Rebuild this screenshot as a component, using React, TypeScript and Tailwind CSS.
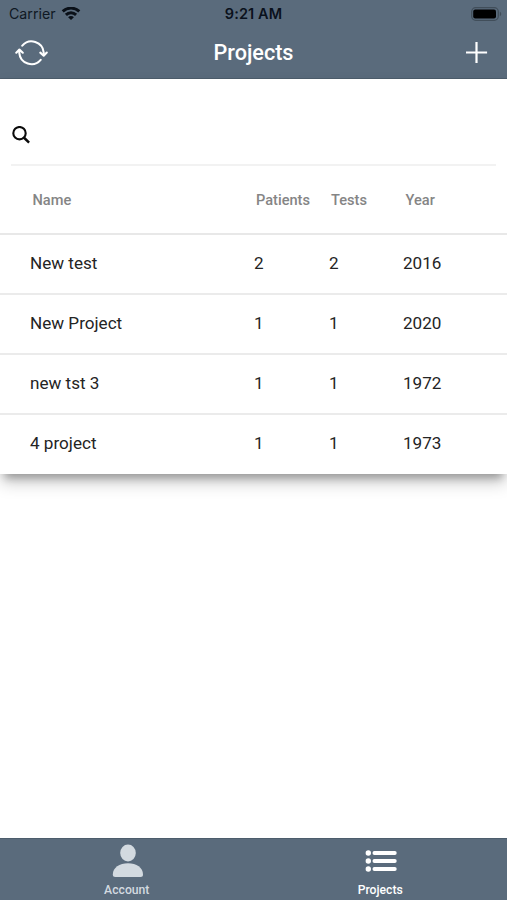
const rows = [
  { name: 'New test', patients: 2, tests: 2, year: 2016 },
  { name: 'New Project', patients: 1, tests: 1, year: 2020 },
  { name: 'new tst 3', patients: 1, tests: 1, year: 1972 },
  { name: '4 project', patients: 1, tests: 1, year: 1973 },
];

function Wifi() {
  return (
    <svg width="20" height="14" viewBox="0 0 20 14" fill="none" stroke="#0a1018" strokeWidth="2.9">
      <path d="M1.7 4.4C6.4 0 13.6 0 18.3 4.4" />
      <path d="M4.9 7.9C7.8 5 12.2 5 15.1 7.9" />
      <path d="M10 13.1L7.1 10.2C8.7 8.7 11.3 8.7 12.9 10.2Z" fill="#0a1018" stroke="none" />
    </svg>
  );
}

function Battery() {
  return (
    <svg width="31" height="14" viewBox="0 0 31 14">
      <rect x="0.7" y="0.7" width="26.6" height="12.6" rx="4" fill="none" stroke="#414e5a" strokeWidth="1.3" />
      <rect x="2.2" y="2.4" width="22.8" height="9.2" rx="2" fill="#000" />
      <path d="M28.8 4.8C30.7 5.5 30.7 8.5 28.8 9.2Z" fill="#414e5a" />
    </svg>
  );
}

function Refresh() {
  return (
    <svg width="34" height="28" viewBox="0 0 34 28" fill="none" stroke="#fff" strokeWidth="2.1" strokeLinecap="round" strokeLinejoin="round">
      <path d="M7.3 6.6A12.2 12.2 0 0 1 28.7 13.5V16" />
      <path d="M25.7 20.9A12.2 12.2 0 0 1 4.3 14V11.5" />
      <path d="M25.3 13.6L28.7 16.7L31.8 13.6" />
      <path d="M1.3 13.7L4.4 10.6L7.8 13.7" />
    </svg>
  );
}

export default function App() {
  return (
    <div className="flex h-[900px] w-[507px] flex-col overflow-hidden bg-white font-[Roboto,sans-serif]">
      <header className="h-[79px] shrink-0 border-b border-[#4d5d6c] bg-[#5a6b7c]">
        <div className="grid h-7 grid-cols-[1fr_120px_1fr] items-center pr-[7px] pl-[9px] font-[Inter,sans-serif]">
          <div className="flex items-center gap-[4px] text-[#0f1823]">
            <span className="w-[48px] text-[14.2px] leading-5 whitespace-nowrap">Carrier</span>
            <Wifi />
          </div>
          <div className="-ml-[2px] text-center text-[14.5px] leading-5 font-semibold tracking-[0.1px] whitespace-nowrap text-[#0a111c]">9:21 AM</div>
          <div className="-mr-[1.5px] -mt-px flex justify-end"><Battery /></div>
        </div>
        <div className="grid h-[49px] grid-cols-[1fr_120px_1fr] items-center pr-[15px] pl-[15px]">
          <Refresh />
          <h1 className="text-center text-[21.6px] leading-6 font-medium text-white">Projects</h1>
          <svg className="mr-[4px] justify-self-end" width="22" height="22" viewBox="0 0 22 22" stroke="#fff" strokeWidth="2.2" strokeLinecap="square">
            <path d="M10.5 1V20M1 10.5H20" />
          </svg>
        </div>
      </header>

      <main className="flex-1">
        <section className="h-[395px] bg-white shadow-[0_9px_8px_-5px_rgba(0,0,0,0.26),0_9px_16px_-1px_rgba(0,0,0,0.22)]">
          <div className="mx-[11px] flex h-[87px] items-end border-b-2 border-[#f2f2f2] pb-[19px]">
            <svg width="19" height="19" viewBox="0 0 19 19" fill="none" stroke="#0b0b0b" strokeWidth="2.1">
              <circle cx="8.5" cy="7.2" r="6.2" />
              <path d="M12.8 11.5L18.1 16.6" strokeWidth="2.5" />
            </svg>
          </div>
          <div className="grid h-[69px] grid-cols-[223.5px_75px_74.5px_1fr] items-center border-b-2 border-[#e8e8e8] pt-[2px] pl-[32.5px] text-[14.6px] font-medium text-[#858585]">
            <span>Name</span>
            <span>Patients</span>
            <span>Tests</span>
            <span>Year</span>
          </div>
          {rows.map((row) => (
            <div key={row.name} className="grid h-[60px] grid-cols-[224px_75px_74px_1fr] items-center border-b-2 border-[#ebebeb] pl-[30px] text-[17.1px] text-[#242424] last:h-[59px] last:border-white">
              <span>{row.name}</span>
              <span>{row.patients}</span>
              <span>{row.tests}</span>
              <span>{row.year}</span>
            </div>
          ))}
        </section>
      </main>

      <nav className="grid h-[62px] shrink-0 grid-cols-2 border-t border-[#4d5d6c] bg-[#5a6b7c] text-[12.2px] leading-[14px] font-medium">
        <div className="flex flex-col items-center pt-[5px] text-[#d3dae0]">
          <svg width="32" height="34" viewBox="0 0 32 34" fill="currentColor">
            <ellipse cx="17" cy="9" rx="7.8" ry="8.5" />
            <path d="M1.8 30.5C1.8 23.5 8.5 19.2 17 19.2S32 23.5 32 30.5Q32 33 29.5 33H4.3Q1.8 33 1.8 30.5Z" />
          </svg>
          <span className="mt-[5px]">Account</span>
        </div>
        <div className="flex flex-col items-center pt-[11px] text-white">
          <svg width="34" height="22" viewBox="0 0 34 22" fill="currentColor">
            <circle cx="5.3" cy="3" r="2.7" />
            <circle cx="5.3" cy="11" r="2.7" />
            <circle cx="5.3" cy="19" r="2.7" />
            <rect x="9.5" y="1.1" width="24.2" height="3.8" rx="1.9" />
            <rect x="9.5" y="9.1" width="24.2" height="3.8" rx="1.9" />
            <rect x="9.5" y="17.1" width="24.2" height="3.8" rx="1.9" />
          </svg>
          <span className="mt-[11px]">Projects</span>
        </div>
      </nav>
    </div>
  );
}
